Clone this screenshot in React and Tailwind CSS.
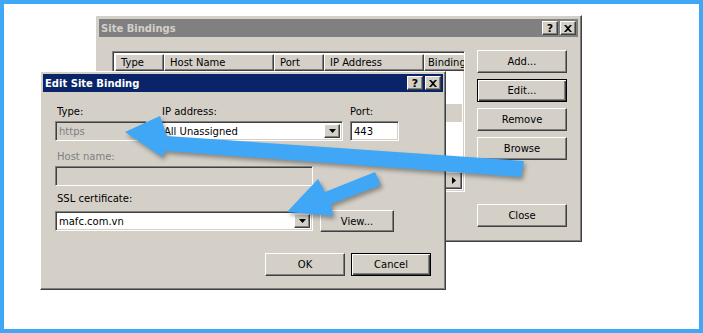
import React from 'react';

const raised = 'border border-t-white border-l-white border-b-[#404040] border-r-[#404040] shadow-[inset_-1px_-1px_#808080]';
const raisedDefault = 'border border-black shadow-[inset_1px_1px_#fff,inset_-1px_-1px_#404040,inset_-2px_-2px_#808080]';
const sunken = 'border border-t-[#808080] border-l-[#808080] border-b-white border-r-white shadow-[inset_1px_1px_#404040,inset_-1px_-1px_#d4d0c8]';

function Button({ children, isDefault, className = '' }) {
  return (
    <div className={`flex items-center justify-center bg-[#d4d0c8] text-black ${isDefault ? raisedDefault : raised} ${className}`}>
      {children}
    </div>
  );
}

function CaptionButtons() {
  return (
    <div className="flex gap-[2px]">
      <div className={`flex h-[14px] w-[16px] items-center justify-center bg-[#d4d0c8] text-[11px] font-bold leading-none text-black ${raised}`}>
        ?
      </div>
      <div className={`flex h-[14px] w-[16px] items-center justify-center bg-[#d4d0c8] ${raised}`}>
        <svg width="8" height="7" viewBox="0 0 8 7">
          <path d="M0 0h2l2 2 2-2h2L5 3.5 8 7H6L4 5 2 7H0l3-3.5z" fill="#000" />
        </svg>
      </div>
    </div>
  );
}

function DropButton() {
  return (
    <div className={`ml-auto flex h-full w-[16px] items-center justify-center bg-[#d4d0c8] ${raised}`}>
      <svg width="7" height="4" viewBox="0 0 7 4">
        <path d="M0 0h7L3.5 4z" fill="#000" />
      </svg>
    </div>
  );
}

function Combo({ value, className = '' }) {
  return (
    <div className={`flex h-[20px] items-center bg-white p-[2px] ${sunken} ${className}`}>
      <span className="pl-[1px] text-black">{value}</span>
      <DropButton />
    </div>
  );
}

function SiteBindings() {
  const columns = [
    { name: 'Type', w: 'w-[49px] pl-[5px]' },
    { name: 'Host Name', w: 'w-[110px] pl-[5px]' },
    { name: 'Port', w: 'w-[50px] pl-[5px]' },
    { name: 'IP Address', w: 'w-[100px] pl-[5px]' },
    { name: 'Binding', w: 'flex-1 pl-[3px]' },
  ];

  return (
    <div className={`absolute left-[91px] top-[11px] flex h-[227px] w-[487px] flex-col bg-[#d4d0c8] p-[3px] ${raised}`}>
      <div className="flex h-[18px] items-center justify-between bg-[#808080] pl-[2px] pr-[2px]">
        <span className="text-[10px] font-bold text-[#d4d0c8]">Site Bindings</span>
        <CaptionButtons />
      </div>

      <div className="flex pl-[13px]">
        <div className={`mt-[14px] flex h-[141px] w-[353px] flex-col overflow-hidden bg-white p-[2px] ${sunken}`}>
          <div className="flex h-[17px] shrink-0">
            {columns.map(col => (
              <div key={col.name} className={`flex shrink-0 items-center whitespace-nowrap bg-[#d4d0c8] ${col.w} ${raised}`}>
                {col.name}
              </div>
            ))}
          </div>
          <div className="h-[17px]" />
          <div className="h-[16px]" />
          <div className="h-[18px] bg-[#d4d0c8]" />
          <div className="flex-1" />
          <div className="flex h-[17px] shrink-0 bg-[#ebe9e5]">
            <div className={`flex w-[17px] items-center justify-center bg-[#d4d0c8] ${raised}`}>
              <svg width="4" height="7" viewBox="0 0 4 7">
                <path d="M4 0v7L0 3.5z" fill="#000" />
              </svg>
            </div>
            <div className="flex-1" />
            <div className={`flex w-[17px] items-center justify-center bg-[#d4d0c8] ${raised}`}>
              <svg width="4" height="7" viewBox="0 0 4 7">
                <path d="M0 0v7l4-3.5z" fill="#000" />
              </svg>
            </div>
          </div>
        </div>

        <div className="ml-[12px] mt-[13px] flex flex-col">
          <Button className="h-[23px] w-[90px]">Add...</Button>
          <Button isDefault className="mt-[6px] h-[23px] w-[90px]">Edit...</Button>
          <Button className="mt-[6px] h-[23px] w-[90px]">Remove</Button>
          <Button className="mt-[6px] h-[23px] w-[90px]">Browse</Button>
          <Button className="mt-[44px] h-[23px] w-[90px]">Close</Button>
        </div>
      </div>
    </div>
  );
}

function EditBinding() {
  return (
    <div className={`absolute left-[36px] top-[67px] flex h-[219px] w-[406px] flex-col bg-[#d4d0c8] p-[2px] ${raised}`}>
      <div className="flex h-[18px] items-center justify-between bg-[#0a246a] pl-[2px] pr-[2px]">
        <span className="text-[10px] font-bold text-white">Edit Site Binding</span>
        <CaptionButtons />
      </div>

      <div className="flex flex-col px-[12px] pt-[13px]">
        <div className="flex items-start">
          <div className="flex w-[92px] flex-col">
            <span className="h-[14px] pl-[2px] leading-[14px]">Type:</span>
            <div className={`mt-[2px] flex h-[20px] items-center bg-[#d4d0c8] pl-[3px] text-[#808080] ${sunken}`}>https</div>
          </div>
          <div className="ml-[13px] flex w-[183px] flex-col">
            <span className="h-[14px] pl-[2px] leading-[14px]">IP address:</span>
            <Combo value="All Unassigned" className="mt-[2px]" />
          </div>
          <div className="ml-[7px] flex w-[49px] flex-col">
            <span className="h-[14px] leading-[14px]">Port:</span>
            <div className={`mt-[2px] flex h-[20px] items-center bg-white pl-[3px] ${sunken}`}>443</div>
          </div>
        </div>

        <span className="mt-[9px] h-[14px] pl-[2px] leading-[14px] text-[#808080]">Host name:</span>
        <div className={`mt-[2px] h-[20px] w-[258px] bg-[#d4d0c8] ${sunken}`} />

        <span className="mt-[6px] h-[14px] pl-[2px] leading-[14px]">SSL certificate:</span>
        <div className="mt-[4px] flex items-center">
          <Combo value="mafc.com.vn" className="w-[258px]" />
          <Button className="ml-[7px] h-[22px] w-[74px]">View...</Button>
        </div>

        <div className="mt-[21px] flex justify-end gap-[6px]">
          <Button className="h-[23px] w-[80px]">OK</Button>
          <Button isDefault className="h-[23px] w-[80px]">Cancel</Button>
        </div>
      </div>
    </div>
  );
}

export default function App() {
  return (
    <div className="relative h-[333px] w-[703px] overflow-hidden border-4 border-[#3fa7f5] bg-white font-['DejaVu_Sans',sans-serif] text-[10px] text-black">
      <SiteBindings />
      <EditBinding />

      {/* callout arrows, drawn in page coordinates */}
      <svg
        className="pointer-events-none absolute left-0 top-0 drop-shadow-[2px_3px_2px_rgba(0,0,0,0.35)]"
        width="695"
        height="325"
        viewBox="4 4 695 325"
      >
        <polygon points="125,132 160,116 167,136 524,161 521,177 165,151 162,157" fill="#3fa7f5" />
        <polygon points="287,212 318,179 325,192 375,172 381,185 331,204 333,216" fill="#3fa7f5" />
      </svg>
    </div>
  );
}
